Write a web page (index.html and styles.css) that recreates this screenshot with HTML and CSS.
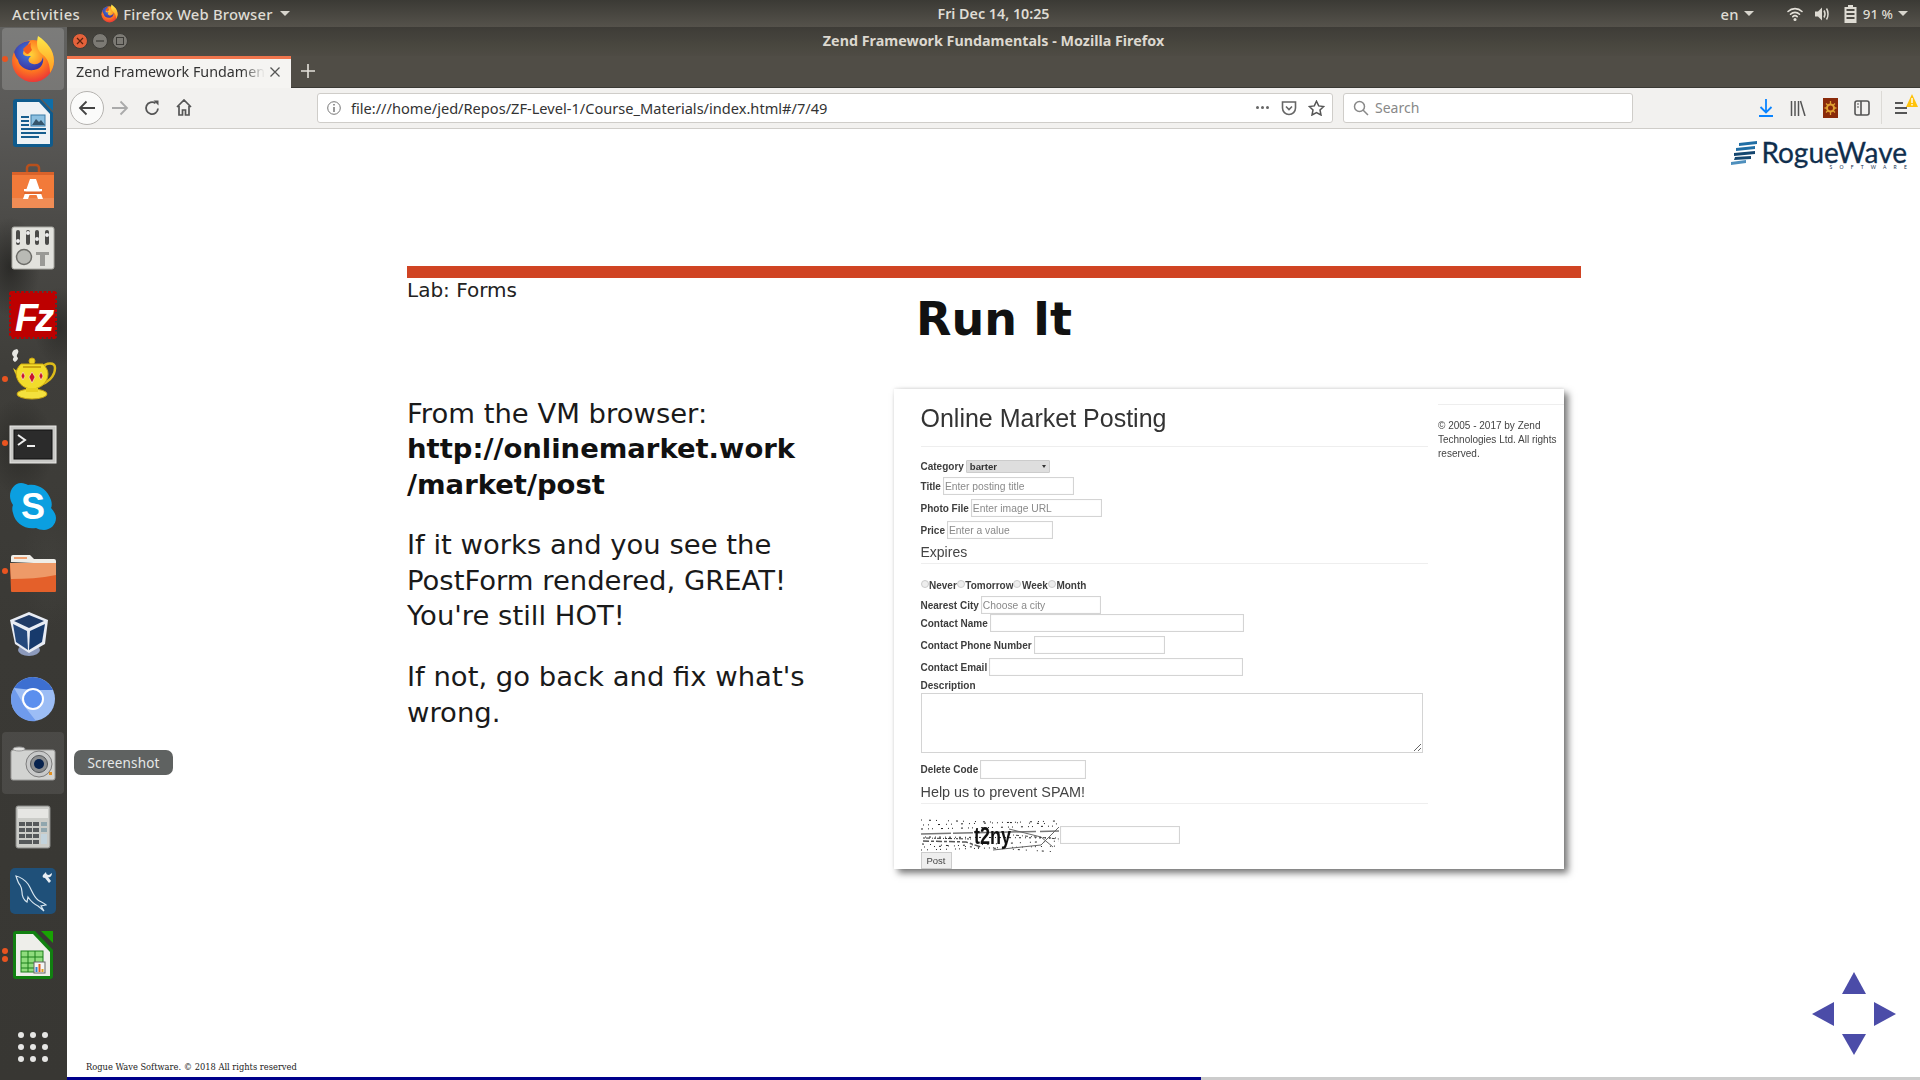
FILE: index.html
```html
<!DOCTYPE html>
<html lang="en">
<head>
<meta charset="utf-8">
<title>Zend Framework Fundamentals</title>
<link rel="stylesheet" href="styles.css">
</head>
<body>
<svg class="defs" width="0" height="0" aria-hidden="true">
  <defs>
    <radialGradient id="ffo" cx="0.45" cy="0.35" r="0.75"><stop offset="0" stop-color="#ffd43a"/><stop offset="0.5" stop-color="#ff7a1f"/><stop offset="1" stop-color="#e5203f"/></radialGradient>
    <linearGradient id="ffy" x1="0" y1="0" x2="0" y2="1"><stop offset="0" stop-color="#ffe94a"/><stop offset="1" stop-color="#ff9a1f"/></linearGradient>
    <radialGradient id="ffb" cx="0.5" cy="0.4" r="0.7"><stop offset="0" stop-color="#3f7fe0"/><stop offset="1" stop-color="#3b2a9a"/></radialGradient>
    <symbol id="firefox" viewBox="0 0 44 46">
      <circle cx="22" cy="25" r="21" fill="url(#ffo)"/>
      <path d="M27 0c9 6 16 14 16 25 0 5-2 9-4 12 0-8-2-14-7-18-3-3-8-6-5-19z" fill="url(#ffy)"/>
      <path d="M3 16C6 9 12 5 19 5c-2 3-3 5-3 7-3 1-4 3-4 6 2 3 5 2 8 2-4 3-3 7 2 8 5 1 9-2 10-7 1 5-1 12-9 13C14 35 8 30 7 24c-2-2-3-5-4-8z" fill="url(#ffb)"/>
      <path d="M12 13c3-3 5-5 8-6-1 3 0 5 1 7-2 2-3 4-5 4-2-1-3-3-4-5z" fill="#f25c1f"/>
    </symbol>
  </defs>
</svg>
<div class="desktop">
  <header class="topbar">
    <div class="tb-left">
      <span class="tb-text activities">Activities</span>
      <span class="tb-app">
        <svg class="tb-ff" width="17" height="19"><use href="#firefox"/></svg>
        <span class="tb-text">Firefox Web Browser</span>
        <span class="caret"></span>
      </span>
    </div>
    <div class="tb-clock">Fri Dec 14, 10:25</div>
    <div class="tb-right">
      <span class="tb-text lang">en</span><span class="caret caret-lang"></span>
      <svg class="tb-wifi" width="18" height="16" viewBox="0 0 18 16" fill="none" stroke="#e4e1d9" stroke-width="1.6" stroke-linecap="round"><path d="M2 5.5a10 10 0 0 1 14 0M4.5 8.2a6.4 6.4 0 0 1 9 0M6.8 10.6a3.2 3.2 0 0 1 4.4 0"/><circle cx="9" cy="13.6" r="1.5" fill="#e4e1d9" stroke="none"/></svg>
      <svg class="tb-vol" width="16" height="16" viewBox="0 0 16 16" fill="#dedbd3"><path d="M1 5.5h3L8 1.5v13l-4-4H1z"/><path d="M10 4.5c1.200 2 1.200 5 0 7M12.500 2.500c2 3 2 8 0 11" fill="none" stroke="#dedbd3" stroke-width="1.500"/></svg>
      <svg class="tb-bat" width="13" height="18" viewBox="0 0 13 18"><path d="M4 0h5v2h3.500v16H.5V2H4z" fill="#dedbd3"/><rect x="2.500" y="4" width="8" height="2" fill="#4a4842"/><rect x="2.500" y="8" width="8" height="2" fill="#4a4842"/><rect x="2.500" y="12" width="8" height="2" fill="#4a4842"/></svg>
      <span class="tb-text pct">91 %</span><span class="caret caret-pct"></span>
    </div>
  </header>

  <div class="main">
    <nav class="dock">
      <div class="dock-item active"><span class="pip"></span>
        <svg class="firefox-big" width="44" height="46"><use href="#firefox"/></svg>
      </div>
      <div class="dock-item">
        <svg class="ico" viewBox="0 0 67 64"><path d="M16 8h24l13 14v31a3 3 0 0 1-3 3H16a3 3 0 0 1-3-3V11a3 3 0 0 1 3-3z" fill="#0f5b8d"/><path d="M17 11h22l11 12v30H17z" fill="#eef2f5"/><path d="M42 8h11v12z" fill="#0f6ea8"/><g fill="#175e8e"><rect x="21" y="25" width="8" height="2"/><rect x="21" y="29" width="8" height="2"/><rect x="21" y="33" width="8" height="2"/><rect x="21" y="37" width="25" height="2"/><rect x="21" y="41" width="25" height="2"/><rect x="21" y="45" width="18" height="2"/></g><rect x="31" y="24" width="14" height="11" fill="#8cc0e0" stroke="#3a7ca8"/><path d="M32 34l4-6 3 3 2-2 4 5z" fill="#35556b"/></svg>
      </div>
      <div class="dock-item">
        <svg class="ico" viewBox="0 0 67 64"><path d="M27 18v-5a3 3 0 0 1 3-3h6a3 3 0 0 1 3 3v5" fill="none" stroke="#b8501c" stroke-width="2.500"/><rect x="12" y="17" width="42" height="36" fill="#f27a3a"/><rect x="12" y="17" width="42" height="3" fill="#d9622a"/><rect x="12" y="43" width="42" height="10" fill="#f08c55"/><path d="M30 24h6l7 20h-5l-1.500-4h-7L28 44h-5z" fill="#fff"/><rect x="24" y="34" width="18" height="2.500" fill="#fff"/><rect x="24" y="36.500" width="18" height="2.500" fill="#e2672c"/></svg>
      </div>
      <div class="dock-item">
        <svg class="ico" viewBox="0 0 67 64"><rect x="12" y="8" width="42" height="42" rx="2" fill="#e2e2dd" stroke="#a8a8a2"/><g fill="#4a4a48"><rect x="16" y="11" width="4" height="15" rx="2"/><rect x="26" y="11" width="4" height="15" rx="2"/><rect x="35" y="11" width="4" height="15" rx="2"/><rect x="45" y="11" width="4" height="15" rx="2"/></g><g fill="#eee"><circle cx="18" cy="22" r="2"/><circle cx="28" cy="14" r="2"/><circle cx="37" cy="20" r="2"/><circle cx="47" cy="16" r="2"/></g><circle cx="24" cy="38" r="7.500" fill="#b9bab5" stroke="#6c6c68" stroke-width="1.500"/><path d="M36 33h13v3h-4v11h-5V36h-4z" fill="#9a9a96"/></svg>
      </div>
      <div class="dock-item">
        <svg class="ico" viewBox="0 0 67 64"><rect x="11" y="10" width="44" height="44" rx="1" fill="#bd0000" stroke="#bd0000" stroke-width="4" stroke-dasharray="3 1.500"/><rect x="11" y="10" width="44" height="44" fill="#bd0000"/><text class="fz" x="15" y="48">Fz</text></svg>
      </div>
      <div class="dock-item"><span class="pip"></span>
        <svg class="ico" viewBox="0 0 67 64"><path d="M14 3c-3 3-2 5 0 7-2 2-1 4 1 5 2-1 3-3 3-4-2-2-1-3 0-5 1-2 0-3-1-4z" fill="#e8e8e3"/><path d="M42 21c4-6 13-6 13 0 0 9-8 15-15 17" fill="none" stroke="#dcbb1a" stroke-width="2.500"/><path d="M13 21l5 4 0 4-3-3z" fill="#ecd225"/><circle cx="32" cy="14" r="3" fill="#ecd225" stroke="#c9a512"/><path d="M21 17h22c3 3 5 6 5 10 0 8-7 15-16 15s-15-7-16-15c0-4 2-7 5-10z" fill="#f2dc2b" stroke="#c9a512"/><path d="M23 19h18v2H23z" fill="#c9a512"/><ellipse cx="32" cy="47" rx="15" ry="5" fill="#f4e13d" stroke="#c9a512"/><path d="M26 41h12v4H26z" fill="#e8cf20"/><g fill="#c9142a" stroke="#fff" stroke-width=".5"><path d="M23 25l2 4-2 4-2-4z"/><path d="M32 25l3 5-3 6-3-6z"/><path d="M41 25l2 4-2 4-2-4z"/></g></svg>
      </div>
      <div class="dock-item"><span class="pip"></span>
        <svg class="ico" viewBox="0 0 67 64"><rect x="10" y="15" width="46" height="37" fill="#c9c9c6" stroke="#e8e8e6"/><rect x="14" y="19" width="38" height="29" fill="#2b2b2b" stroke="#111"/><path d="M18 24l7 5-7 5" fill="none" stroke="#eee" stroke-width="2"/><rect x="27" y="34" width="8" height="2" fill="#eee"/></svg>
      </div>
      <div class="dock-item">
        <svg class="ico" viewBox="0 0 67 64"><path d="M21 8c3 0 5 1 7 2 10-2 20 5 23 15 1 3 1 6 0 8 3 3 5 7 5 10 0 7-6 12-12 12-3 0-6-1-8-2-11 2-21-5-23-15-1-3-1-6 0-8-2-3-3-6-3-9C10 14 15 8 21 8z" fill="#0b9fe0"/><text class="skype" x="33" y="44">S</text></svg>
      </div>
      <div class="dock-item"><span class="pip"></span>
        <svg class="ico" viewBox="0 0 67 64"><path d="M11 23v-5a2 2 0 0 1 2-2h17l4 4h20a2 2 0 0 1 2 2v3z" fill="#efeee9"/><rect x="14" y="18" width="13" height="2" fill="#f0a070"/><path d="M10 24h46v28a1 1 0 0 1-1 1H12a1 1 0 0 1-1-1z" fill="#e4602a"/><path d="M10 24h46v12c-15 3-30 4-45 4z" fill="#ee9a68"/></svg>
      </div>
      <div class="dock-item">
        <svg class="ico" viewBox="0 0 67 64"><ellipse cx="29" cy="47" rx="11" ry="6" fill="#8c9abc"/><path d="M29 9l19 8-3 24-16 9-14-9-5-24z" fill="#e8ecf4"/><path d="M29 12l15 6-15 7-15-7z" fill="#1e3a66"/><path d="M13 21l14 7 1 19-12-8z" fill="#24487c"/><path d="M45 21l-15 7-1 19 13-8z" fill="#173a6c"/></svg>
      </div>
      <div class="dock-item">
        <svg class="ico" viewBox="0 0 67 64"><circle cx="33" cy="32" r="22" fill="#9cbdf5"/><path d="M14 21A22 22 0 0 1 53 23L33 23z" fill="#3d6fd1"/><path d="M11 32a22 22 0 0 1 3-11l11 19 11 14a22 22 0 0 1-25-22z" fill="#6f9bec"/><circle cx="33" cy="32" r="10" fill="#5b8fee" stroke="#fff" stroke-width="2"/></svg>
      </div>
      <div class="dock-item hover">
        <svg class="ico" viewBox="0 0 67 64"><rect x="11" y="19" width="44" height="30" rx="2" fill="#d2d3d1" stroke="#9a9a98"/><ellipse cx="19" cy="18" rx="6" ry="2" fill="#e2e2e0" stroke="#999"/><circle cx="39" cy="33" r="13" fill="#c8c9c9" stroke="#7c7c7c"/><circle cx="39" cy="33" r="8.500" fill="#8c8e90" stroke="#55585a"/><circle cx="39" cy="33" r="5" fill="#07224d"/><rect x="49" y="41" width="3" height="3" fill="#e29020"/></svg>
      </div>
      <div class="dock-item">
        <svg class="ico" viewBox="0 0 67 64"><rect x="16" y="11" width="34" height="42" rx="2" fill="#cbccc8" stroke="#8a8a88"/><rect x="18" y="14" width="30" height="9" fill="#e6e6e3"/><g fill="#55585a"><rect x="19" y="27" width="6" height="4"/><rect x="26" y="27" width="6" height="4"/><rect x="33" y="27" width="6" height="4"/><rect x="19" y="33" width="6" height="4"/><rect x="26" y="33" width="6" height="4"/><rect x="33" y="33" width="6" height="4"/><rect x="19" y="39" width="6" height="4"/><rect x="26" y="39" width="6" height="4"/><rect x="33" y="39" width="6" height="4"/><rect x="19" y="45" width="13" height="4"/><rect x="33" y="45" width="6" height="4"/></g><g fill="#90a6ae"><rect x="41" y="27" width="6" height="4"/><rect x="41" y="33" width="6" height="4"/></g><rect x="41" y="39" width="6" height="10" fill="#c3d3dc"/></svg>
      </div>
      <div class="dock-item">
        <svg class="ico" viewBox="0 0 67 64"><rect x="10" y="9" width="46" height="46" rx="5" fill="#1f5079"/><path d="M16 17c4 1 8 3 12 8 4 6 5 12 10 16 3 2 6 3 8 5l-5 1 3 5-6-5c-6-3-8-6-10-9l-1 5c-3-2-5-6-5-10 0-2 0-4-2-7-2-2-3-6-4-9z" fill="none" stroke="#d8e6f0" stroke-width="1.200"/><path d="M43 16l3-3c0 2 1 3 3 3l3-2c0 3-2 5-4 4l3 4-2 2-4-5c-2 0-3-1-2-3z" fill="#e8eef3"/></svg>
      </div>
      <div class="dock-item"><span class="pip pip-a"></span><span class="pip pip-b"></span>
        <svg class="ico" viewBox="0 0 67 64"><path d="M16 8h19l18 19v26a3 3 0 0 1-3 3H16a3 3 0 0 1-3-3V11a3 3 0 0 1 3-3z" fill="#118011"/><path d="M16 11h17l17 18v24H16z" fill="#eeeeea"/><path d="M41 8h12v12z" fill="#18a303"/><rect x="21" y="28" width="22" height="21" fill="#8fdc7d" stroke="#1a7f1a"/><path d="M21 34h22M21 40h22M21 45h22M28 28v21M35 28v21" stroke="#1a7f1a" fill="none"/><rect x="34" y="39" width="11" height="11" fill="#f5f5f5" stroke="#666"/><rect x="35.500" y="44" width="2" height="5" fill="#3080d0"/><rect x="38.500" y="41" width="2" height="8" fill="#e06020"/><rect x="41.500" y="46" width="2" height="3" fill="#e0a020"/></svg>
      </div>
      <div class="dock-apps">
        <svg width="36" height="36" viewBox="0 0 36 36" fill="#e6e6e4"><circle cx="6" cy="6" r="3"/><circle cx="18" cy="6" r="3"/><circle cx="30" cy="6" r="3"/><circle cx="6" cy="18" r="3"/><circle cx="18" cy="18" r="3"/><circle cx="30" cy="18" r="3"/><circle cx="6" cy="30" r="3"/><circle cx="18" cy="30" r="3"/><circle cx="30" cy="30" r="3"/></svg>
      </div>
      <div class="tooltip">Screenshot</div>
    </nav>

    <div class="window">
      <div class="titlebar">
        <div class="win-buttons">
          <span class="wb wb-close"><svg width="8" height="8" viewBox="0 0 8 8"><path d="M1 1l6 6M7 1L1 7" stroke="#5a2410" stroke-width="1.200"/></svg></span>
          <span class="wb"><svg width="8" height="8" viewBox="0 0 8 8"><path d="M0 4h8" stroke="#3c3b37" stroke-width="1.200"/></svg></span>
          <span class="wb"><svg width="8" height="8" viewBox="0 0 8 8"><rect x="0.500" y="0.500" width="7" height="7" fill="none" stroke="#3c3b37"/></svg></span>
        </div>
        <div class="win-title">Zend Framework Fundamentals - Mozilla Firefox</div>
      </div>
      <div class="tabstrip">
        <div class="tab">
          <span class="tab-label">Zend Framework Fundamen</span>
          <svg class="tab-x" width="12" height="12" viewBox="0 0 12 12"><path d="M1.500 1.500l9 9M10.500 1.500l-9 9" stroke="#555" stroke-width="1.300"/></svg>
        </div>
        <svg class="newtab" width="14" height="14" viewBox="0 0 14 14"><path d="M7 0v14M0 7h14" stroke="#e4e1da" stroke-width="1.600"/></svg>
      </div>
      <div class="toolbar">
        <span class="back"><svg width="18" height="16" viewBox="0 0 18 16" fill="none" stroke="#444" stroke-width="1.800"><path d="M17 8H2M8.500 1.500L2 8l6.500 6.500"/></svg></span>
        <svg class="tool-fwd" width="18" height="16" viewBox="0 0 18 16" fill="none" stroke="#aaa" stroke-width="1.800"><path d="M1 8h15M9.500 1.500L16 8l-6.500 6.500"/></svg>
        <svg class="tool-reload" width="16" height="16" viewBox="0 0 16 16" fill="none" stroke="#555" stroke-width="1.800"><path d="M14 8.500A6 6 0 1 1 11.500 3.200"/><path d="M9.500 0.500h5v5z" fill="#555" stroke="none"/></svg>
        <svg class="tool-home" width="16" height="17" viewBox="0 0 16 17" fill="none" stroke="#555" stroke-width="1.700"><path d="M1 8l7-7 7 7M3 7v9h3.500v-5h3v5H13V7"/></svg>
        <div class="urlbar">
          <svg class="url-info" width="14" height="14" viewBox="0 0 14 14" fill="none" stroke="#777"><circle cx="7" cy="7" r="6.300"/><path d="M7 6v5M7 3v1.500" stroke-width="1.500"/></svg>
          <span class="url-text">file:///home/jed/Repos/ZF-Level-1/Course_Materials/index.html#/7/49</span>
          <span class="url-dots"><i></i><i></i><i></i></span>
          <svg class="url-pocket" width="16" height="16" viewBox="0 0 16 16" fill="none" stroke="#666" stroke-width="1.600"><path d="M1.500 2h13v6a6.500 6.500 0 0 1-13 0z"/><path d="M5 6.500l3 3 3-3"/></svg>
          <svg class="url-star" width="17" height="16" viewBox="0 0 17 16" fill="none" stroke="#555" stroke-width="1.500"><path d="M8.500 1.200l2.200 4.700 5 .6-3.700 3.500 1 5-4.500-2.500L4 15l1-5L1.300 6.500l5-.6z"/></svg>
        </div>
        <div class="searchbar">
          <svg width="16" height="16" viewBox="0 0 16 16" fill="none" stroke="#888" stroke-width="1.500"><circle cx="6.500" cy="6.500" r="5"/><path d="M10 10l5 5"/></svg>
          <span>Search</span>
        </div>
        <div class="tool-right">
          <svg class="tr-dl" width="14" height="18" viewBox="0 0 14 18" fill="none" stroke="#0a84ff" stroke-width="1.800"><path d="M7 0v13M1.500 8L7 13.500 12.500 8M0 17h14"/></svg>
          <svg class="tr-lib" width="16" height="16" viewBox="0 0 16 16" fill="none" stroke="#555" stroke-width="1.500"><path d="M1.500 1v15M5 1v15M8.500 1v15M10.500 1l4.500 15"/></svg>
          <svg class="tr-ext" width="15" height="20" viewBox="0 0 15 20"><rect width="15" height="20" fill="#8a2a0a"/><circle cx="7.500" cy="10" r="3.500" fill="none" stroke="#e0a030" stroke-width="2"/><path d="M7.500 3v3M7.500 14v3M1.500 10h3M10.500 10h3M3 5.500l2 2M12 5.500l-2 2M3 14.500l2-2M12 14.500l-2-2" stroke="#e0a030" stroke-width="1.300"/></svg>
          <svg class="tr-side" width="16" height="16" viewBox="0 0 16 16" fill="none" stroke="#555" stroke-width="1.600"><rect x="1" y="1" width="14" height="14" rx="2"/><path d="M7 1v14"/><path d="M3 4h2M3 7h2" stroke-width="1.200"/></svg>
          <span class="tr-sep"></span>
          <span class="tr-menu">
            <svg width="13" height="14" viewBox="0 0 13 14" fill="none" stroke="#555" stroke-width="1.800"><path d="M0 2h8M0 7h12M0 12h12"/></svg>
            <svg class="tr-warn" width="12" height="13" viewBox="0 0 12 13"><path d="M6 0l6 13H0z" fill="#ffc20a"/><rect x="5.300" y="4" width="1.400" height="5" fill="#fff"/><rect x="5.300" y="10" width="1.400" height="1.500" fill="#fff"/></svg>
          </span>
        </div>
      </div>

      <main class="page">
        <div class="page-head">
          <div class="logo">
            <svg width="27" height="24" viewBox="0 0 27 24"><path d="M8 2l18-2v3L8 5zM5 7l19-2v3L5 10z" fill="#1f6ea5"/><path d="M3 12l21-2v3L3 15zM4 16l16-1v3L3 19z" fill="#14466f"/><path d="M0 21l15-2v3L0 24z" fill="#4e8fbd"/></svg>
            <div class="logo-words">
              <span class="logo-name">RogueWave</span>
              <span class="logo-sub">SOFTWARE</span>
            </div>
          </div>
        </div>

        <section class="slide">
          <div class="slide-rule"></div>
          <div class="slide-kicker">Lab: Forms</div>
          <h1 class="slide-title">Run It</h1>
          <div class="slide-body">
            <div class="slide-text">
              <p>From the VM browser:<br><strong>http://onlinemarket.work<br>/market/post</strong></p>
              <p>If it works and you see the PostForm rendered, GREAT! You're still HOT!</p>
              <p>If not, go back and fix what's wrong.</p>
            </div>

            <div class="shot">
              <form class="shot-main">
                <h2 class="shot-h1">Online Market Posting</h2>
                <div class="row row-select"><label>Category</label><span class="select-wrap"><select><option>barter</option></select></span></div>
                <div class="row"><label>Title</label><input class="w131" placeholder="Enter posting title"></div>
                <div class="row"><label>Photo File</label><input class="w131" placeholder="Enter image URL"></div>
                <div class="row"><label>Price</label><input class="w106" placeholder="Enter a value"></div>
                <h3 class="shot-h2">Expires</h3>
                <div class="radios">
                  <span class="radio"></span><label>Never</label>
                  <span class="radio"></span><label>Tomorrow</label>
                  <span class="radio"></span><label>Week</label>
                  <span class="radio"></span><label>Month</label>
                </div>
                <div class="row row-city"><label>Nearest City</label><input class="w120" placeholder="Choose a city"></div>
                <div class="row row-tight"><label>Contact Name</label><input class="w254"></div>
                <div class="row"><label>Contact Phone Number</label><input class="w131"></div>
                <div class="row"><label>Contact Email</label><input class="w254"></div>
                <label class="desc-label">Description</label>
                <textarea class="desc"></textarea>
                <div class="row row-delete"><label>Delete Code</label><input class="w106"></div>
                <h3 class="shot-h2 shot-h2-help">Help us to prevent SPAM!</h3>
                <div class="captcha-row">
                  <svg class="captcha" width="139" height="36" viewBox="0 0 139 36" fill="none" stroke="#222">
                    <path d="M0 3L139 7" stroke-dasharray="1 7 2 5 1 11"/>
                    <path d="M2 8L136 4" stroke-dasharray="1 4 1 9 2 6"/>
                    <path d="M0 12L138 9" stroke-dasharray="2 5 1 3 1 8"/>
                    <path d="M0 33L138 29" stroke-dasharray="1 5 1 8 1 3"/>
                    <path d="M1 27L138 35" stroke-dasharray="2 6 1 10 1 4"/>
                    <path d="M3 30L138 24" stroke-dasharray="1 9 1 4 2 7"/>
                    <path d="M0 17L138 14" stroke="#777" stroke-width="1.500" stroke-dasharray="30 2 20 3 60 4"/>
                    <path d="M2 21L50 22" stroke="#333" stroke-dasharray="2 1 4 2 1 1"/>
                    <path d="M2 24L45 25 60 30" stroke="#555" stroke-width="1.500" stroke-dasharray="6 2 3 2"/>
                    <path d="M72 33L120 28 138 10" stroke="#666"/>
                    <path d="M88 12L120 20 132 30" stroke="#666"/>
                    <path d="M92 18L138 22" stroke="#444" stroke-dasharray="1 2 3 3"/>
                    <path d="M4 20L136 21" stroke-dasharray="1 3 2 4"/>
                    <text class="captcha-text" x="53" y="27" textLength="37" lengthAdjust="spacingAndGlyphs">t2ny</text>
                  </svg>
                  <input class="w120">
                </div>
                <button type="button" class="post">Post</button>
              </form>
              <aside class="shot-aside">
                <p>© 2005 - 2017 by Zend Technologies Ltd. All rights reserved.</p>
              </aside>
            </div>
          </div>
        </section>

        <div class="page-foot">
          <small class="copyright">Rogue Wave Software. © 2018 All rights reserved</small>
          <svg class="arrows" width="84" height="83" viewBox="0 0 84 83" fill="#4b4ca8">
            <path d="M42 0l12 22H30z"/>
            <path d="M0 42l22-12v24z"/>
            <path d="M84 42L62 30v24z"/>
            <path d="M42 83L30 62h24z"/>
          </svg>
        </div>
        <div class="progress"><span class="progress-fill"></span></div>
      </main>
    </div>
  </div>
</div>
</body>
</html>
```

FILE: styles.css
```css
* { box-sizing: border-box; }
html, body { margin: 0; padding: 0; }
body { font-family: "Noto Sans", sans-serif; background: #3a3935; overflow: hidden; }
.defs { position: absolute; }
.desktop { width: 1920px; height: 1080px; display: flex; flex-direction: column; overflow: hidden; }

/* top bar */
.topbar { height: 27px; flex: none; display: flex; align-items: center; justify-content: space-between; position: relative; background: linear-gradient(#3b3a35, #55524b); color: #dfdcd4; }
.tb-text { font-size: 14.800px; font-weight: 500; color: #dfdcd4; white-space: nowrap; letter-spacing: .2px; }
.activities { letter-spacing: .45px; }
.tb-left { display: flex; align-items: center; padding-left: 12px; }
.tb-app { display: flex; align-items: center; margin-left: 21px; }
.tb-ff { margin-right: 5px; }
.tb-clock { position: absolute; left: 0; right: 0; text-align: center; padding-left: 67px; font-size: 14.300px; font-weight: 600; color: #dfdcd4; pointer-events: none; }
.caret { width: 0; height: 0; border: 5px solid transparent; border-top: 5px solid #d8d5cd; border-bottom: 0; margin-left: 7px; display: inline-block; }
.tb-right { display: flex; align-items: center; padding-right: 12px; }
.caret-lang { margin-left: 5px; margin-right: 32px; }
.tb-vol { margin-left: 10px; }
.tb-bat { margin-left: 14px; }
.pct { margin-left: 6px; font-size: 13.400px; letter-spacing: 0; }
.caret-pct { margin-left: 5px; }

.main { flex: 1; display: flex; min-height: 0; }

/* dock */
.dock { width: 67px; flex: none; display: flex; flex-direction: column; position: relative;
  background:
    radial-gradient(ellipse 30px 50px at 10px 240px, rgba(20,20,18,.55), transparent),
    radial-gradient(ellipse 26px 40px at 60px 300px, rgba(20,20,18,.4), transparent),
    radial-gradient(ellipse 34px 50px at 20px 420px, rgba(20,20,18,.4), transparent),
    radial-gradient(ellipse 30px 60px at 50px 540px, rgba(80,80,75,.25), transparent),
    linear-gradient(#626260 0, #5a5957 90px, #4b4a47 200px, #3f3e3a 340px, #3a3935 620px, #383733 100%); }
.dock-item { height: 64px; flex: none; position: relative; display: flex; align-items: center; justify-content: center; }
.ico { width: 67px; height: 64px; display: block; }
.active::before, .hover::before { content: ""; position: absolute; left: 2px; right: 3px; top: 1px; bottom: 1px; border-radius: 4px; }
.active::before { background: rgba(255,255,255,.17); }
.hover::before { background: rgba(255,255,255,.09); }
.dock-item svg { position: relative; }
.firefox-big { margin-top: -1px; margin-right: 1px; }
.pip { position: absolute; left: 2px; top: 29px; width: 6px; height: 6px; border-radius: 50%; background: #e95420; z-index: 1; }
.pip-a { top: 25px; }
.pip-b { top: 33px; }
.dock-apps { margin-top: auto; height: 60px; display: flex; justify-content: center; align-items: center; padding-bottom: 7px; padding-right: 1px; }
.tooltip { position: absolute; left: 74px; top: 723px; width: 99px; height: 25px; border-radius: 7px; background: #5f6261; color: #e6e8e8; font-size: 13.500px; line-height: 26px; text-align: center; z-index: 5; letter-spacing: .15px; }
.fz { font-family: "Liberation Sans", sans-serif; font-weight: 700; font-style: italic; font-size: 38px; fill: #fff; letter-spacing: -3px; }
.skype { font-family: "Liberation Sans", sans-serif; font-weight: 700; font-size: 36px; fill: #fff; text-anchor: middle; }

/* window */
.window { flex: 1; min-width: 0; display: flex; flex-direction: column; }
.titlebar { height: 29px; flex: none; display: flex; align-items: center; position: relative; padding-bottom: 2px; background: linear-gradient(#3e3c37, #4a4840 70%, #4e4b44); }
.win-buttons { display: flex; gap: 4px; padding-left: 5px; }
.wb { width: 16px; height: 16px; border-radius: 50%; background: #7c7a74; display: flex; align-items: center; justify-content: center; border: 1px solid #3c3b37; }
.wb-close { background: #e4613a; }
.win-title { position: absolute; left: 0; right: 0; top: 4px; text-align: center; font-size: 14.300px; font-weight: 700; color: #dcd8cf; }
.tabstrip { height: 32px; flex: none; display: flex; align-items: stretch; background: #504d46; border-bottom: 1px solid #3a3934; }
.tab { width: 224px; margin-bottom: -1px; background: #f5f4f2; border-top: 3px solid #f0754d; display: flex; align-items: center; padding: 0 10px 4px 9px; }
.tab-label { flex: none; white-space: nowrap; font-size: 14.300px; color: #333; -webkit-mask-image: linear-gradient(90deg, #000 88%, transparent 100%); mask-image: linear-gradient(90deg, #000 88%, transparent 100%); }
.tab-x { margin-left: auto; flex: none; }
.newtab { align-self: center; margin-left: 10px; margin-top: -1px; }
.toolbar { height: 41px; flex: none; display: flex; align-items: center; background: #f2f1ef; border-bottom: 1px solid #cfcdc9; padding-left: 3px; padding-bottom: 1px; }
.back { width: 34px; height: 34px; border-radius: 50%; border: 1px solid #b5b3b0; background: #fbfbfa; display: flex; align-items: center; justify-content: center; flex: none; }
.tool-fwd { margin-left: 7px; flex: none; }
.tool-reload { margin-left: 15px; flex: none; }
.tool-home { margin-left: 16px; flex: none; }
.urlbar { width: 1016px; height: 30px; margin-left: 125px; flex: none; display: flex; align-items: center; background: #fff; border: 1px solid #cfcdc9; border-radius: 3px; padding: 0 7px 0 9px; }
.url-text { flex: 1; margin-left: 10px; padding-top: 1px; font-size: 14.600px; color: #333; white-space: nowrap; }
.url-dots { display: flex; gap: 2px; margin-right: 12px; }
.url-dots i { width: 3px; height: 3px; border-radius: 50%; background: #666; display: block; }
.url-star { margin-left: 11px; }
.searchbar { width: 290px; height: 30px; margin-left: 10px; flex: none; display: flex; align-items: center; gap: 6px; background: #fff; border: 1px solid #cfcdc9; border-radius: 3px; padding-left: 9px; color: #888; font-size: 14px; }
.tool-right { flex: 1; display: flex; align-items: center; padding-left: 126px; }
.tr-lib { margin-left: 17px; }
.tr-ext { margin-left: 17px; }
.tr-side { margin-left: 16px; }
.tr-sep { width: 1px; height: 33px; background: #dcdad6; margin-left: 11px; }
.tr-menu { position: relative; margin-left: 13px; display: flex; }
.tr-warn { position: absolute; left: 11px; top: -7px; }

/* page */
.page { flex: 1; min-height: 0; display: flex; flex-direction: column; background: #fff; }
.page-head { height: 137px; flex: none; display: flex; justify-content: flex-end; padding: 11px 13px 0 0; }
.logo { display: flex; align-items: flex-start; gap: 3px; height: 30px; }
.logo svg { margin-top: 1px; }
.logo-words { display: flex; flex-direction: column; color: #0f2e4d; }
.logo-name { font-family: "Lato", sans-serif; font-size: 28px; line-height: 25px; font-weight: 400; -webkit-text-stroke: .3px #0f2e4d; }
.logo-sub { font-family: "Lato", sans-serif; font-size: 5px; line-height: 5px; letter-spacing: 7.200px; text-align: right; margin-right: -7px; width: 100px; align-self: flex-end; }

.slide { width: 1174px; margin-left: 340px; flex: none; font-family: "DejaVu Sans", sans-serif; color: #111; }
.slide-rule { height: 12px; background: #d04423; }
.slide-kicker { font-size: 20px; line-height: 24px; color: #222; }
.slide-title { margin: -11px 0 0; text-align: center; font-size: 46px; line-height: 57px; font-weight: 700; color: #111; }
.slide-body { display: flex; justify-content: space-between; align-items: flex-start; margin-top: 41px; padding-right: 17px; }
.slide-text { width: 420px; font-size: 27.450px; line-height: 35.600px; padding-top: 6.500px; color: #1a1a1a; }
.slide-text p { margin: 0 0 25px; }
.slide-text strong { color: #111; }

/* embedded screenshot */
.shot { width: 670px; height: 480px; flex: none; display: flex; gap: 10px; padding-left: 26.500px; overflow: hidden; background: #fff; box-shadow: 4px 4px 7px rgba(0,0,0,.55), 0 -1px 3px rgba(0,0,0,.08); font-family: "Liberation Sans", sans-serif; color: #333; filter: blur(.35px); }
.shot-main { width: 507.500px; flex: none; display: flex; flex-direction: column; align-items: flex-start; }
.shot-h1 { width: 100%; margin: 14px 0 0; padding-bottom: 13px; border-bottom: 1px solid #eee; font-size: 25px; line-height: 30px; font-weight: 400; color: #333; }
.row { display: flex; align-items: center; gap: 2px; margin-top: 4px; height: 18px; }
.row label, .radios label, .desc-label { font-size: 10px; font-weight: 700; color: #3d3d3d; white-space: nowrap; }
.row input, .captcha-row input { height: 18px; border: 1px solid #d4d4d4; box-shadow: inset 0 0 1px #ddd; padding: 0 1px; font: 10.300px "Liberation Sans", sans-serif; background: #fff; outline: 0; }
input::placeholder { color: #8a8a8a; opacity: 1; }
.w131 { width: 131px; } .w106 { width: 106px; } .w120 { width: 120px; } .w254 { width: 254px; }
.row-select { margin-top: 13px; height: 13px; }
.select-wrap { position: relative; display: block; }
.select-wrap::after { content: ""; position: absolute; right: 4px; top: 5px; width: 0; height: 0; border: 2px solid transparent; border-top: 3px solid #333; border-bottom: 0; }
.row-select select { display: block; width: 84px; height: 13px; padding: 0 0 0 3px; border: 1px solid #ccc; border-radius: 1px; background: #dedede; -webkit-appearance: none; appearance: none; font: 700 9.600px "Liberation Sans", sans-serif; color: #333; }
.shot-h2 { width: 100%; margin: 5px 0 0; padding-bottom: 3px; border-bottom: 1px solid #eee; font-size: 14px; line-height: 16px; font-weight: 400; color: #444; }
.radios { display: flex; align-items: center; height: 12px; margin-top: 16px; }
.radio { width: 8px; height: 8px; border-radius: 50%; border: 1px solid #ccc; background: #eee; margin: -3px .5px 0 0; }
.radios label { margin-right: 0; }
.row-city { margin-top: 5px; }
.row-tight { margin-top: 0; }
.desc-label { margin-top: 4px; line-height: 12px; }
.desc { width: 502px; height: 62px; margin-top: 1px; border: 1px solid #d4d4d4; outline: 0; display: block; }
.row-delete { margin-top: 7px; height: 19px; }
.row-delete input { height: 19px; }
.shot-h2-help { margin-top: 5px; font-size: 14.400px; }
.captcha-row { display: flex; align-items: center; margin-top: 13px; }
.captcha { flex: none; display: block; }
.captcha-text { font: 700 24px "Liberation Sans", sans-serif; fill: #111; stroke: none; }
.post { width: 31px; height: 18px; margin-top: -1px; padding: 0; border: 1px solid #ccc; background: #eee; font: 9.500px "Liberation Sans", sans-serif; color: #444; }
.shot-aside { flex: 1; margin-top: 15px; border-top: 1px solid #eee; font-size: 10px; line-height: 14px; color: #444; padding-right: 4px; }
.shot-aside p { margin: 14px 0 0; }

.page-foot { flex: 1; min-height: 0; display: flex; justify-content: space-between; align-items: flex-end; padding: 0 24px 22px 19px; }
.copyright { font-family: "DejaVu Serif", serif; font-size: 8.300px; line-height: 10px; color: #222; margin-bottom: -17px; }
.progress { height: 3px; flex: none; background: #ccc; }
.progress-fill { display: block; width: 1134px; height: 3px; background: #00008b; }
```
